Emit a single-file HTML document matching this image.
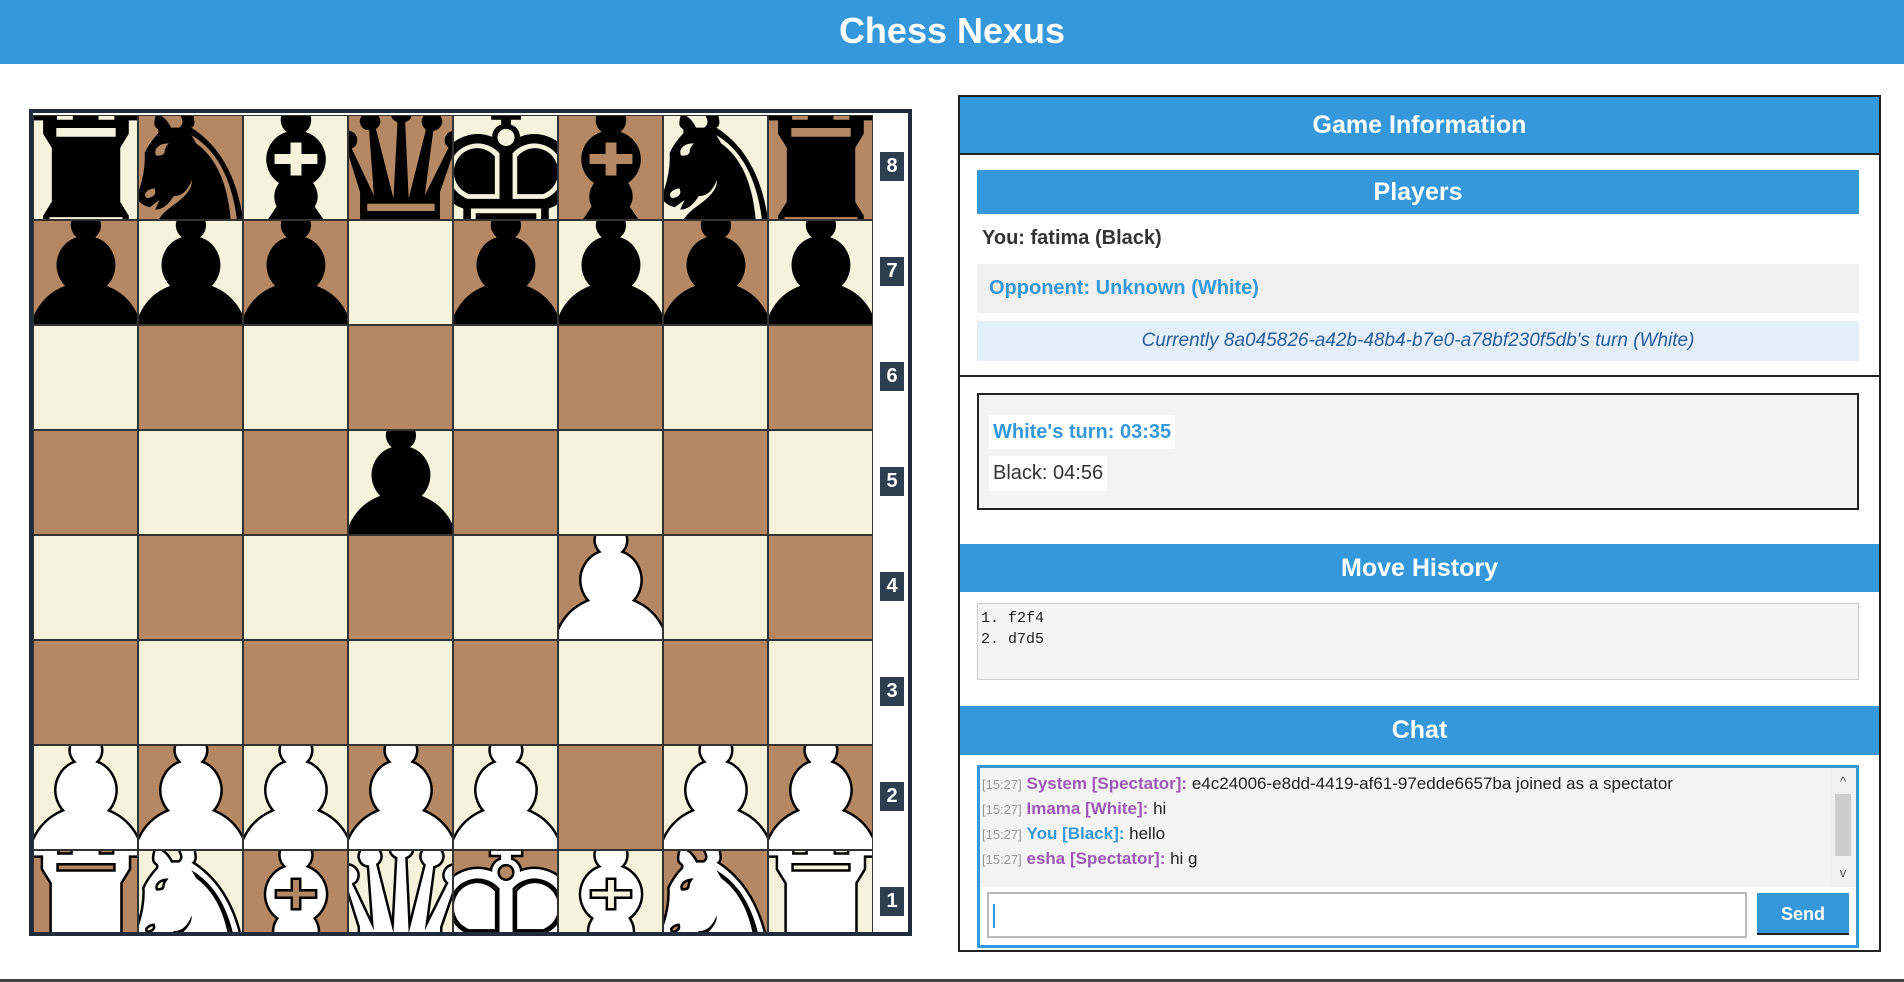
<!DOCTYPE html>
<html><head><meta charset="utf-8"><style>
*{box-sizing:border-box;margin:0;padding:0}
body{width:1904px;height:982px;overflow:hidden;background:#fff;font-family:"Liberation Sans",Arial,sans-serif;position:relative}
.hdr{position:absolute;left:0;top:0;width:1904px;height:64px;background:#3498db;color:#fff;font-weight:bold;font-size:36px;text-align:center;line-height:62px}
.board{position:absolute;left:29px;top:109px;width:883px;height:827px;border:4px solid #1f2d3d;background:#fff;overflow:hidden}
.sq{position:absolute;width:105px;height:105px;border:1px solid #333;overflow:hidden;text-align:center}
.l{background:#f5f3dc}.d{background:#b58863}
.pc{position:absolute;left:-43px;top:-32px;width:190px;font-size:190px;line-height:190px;text-align:center;font-family:"DejaVu Sans",sans-serif}
.b{color:#000}.w{color:#fff;-webkit-text-stroke:5px #000;paint-order:stroke fill}
.lab{position:absolute;left:847px;width:24px;height:29px;background:#2c3e50;color:#fff;font-weight:bold;font-size:20px;text-align:center;line-height:29px}
.panel{position:absolute;left:958px;top:95px;width:923px;height:857px;border:2px solid #222;background:#fff}
.bh{position:absolute;left:0;width:919px;background:#3498db;color:#fff;font-weight:bold;font-size:25px;text-align:center}
.n{font-weight:bold}
</style></head><body>
<div class="hdr">Chess Nexus</div>
<div class="board" id="bd"></div>
<div class="panel">
 <div class="bh" style="top:0;height:56px;line-height:56px">Game Information</div>
 <div style="position:absolute;left:0;top:56px;width:919px;height:224px;border-top:2px solid #222;border-bottom:2px solid #222"></div>
 <div class="bh" style="left:17px;width:882px;top:73px;height:44px;line-height:44px">Players</div>
 <div style="position:absolute;left:22px;top:130px;font-size:20px;font-weight:bold;color:#333">You: fatima (Black)</div>
 <div style="position:absolute;left:17px;top:167px;width:882px;height:49px;background:#f0f0f0;color:#3498db;font-weight:bold;font-size:20px;line-height:49px;padding-left:12px">Opponent: Unknown (White)</div>
 <div style="position:absolute;left:17px;top:224px;width:882px;height:40px;background:#e3f0fb;color:#2a5b9b;font-style:italic;font-size:19px;line-height:40px;text-align:center">Currently 8a045826-a42b-48b4-b7e0-a78bf230f5db's turn (White)</div>
 <div style="position:absolute;left:17px;top:296px;width:882px;height:117px;background:#f4f4f4;border:2px solid #222">
  <div style="position:absolute;left:10px;top:20px;height:34px;padding:0 4px;background:#fff;color:#3498db;font-weight:bold;font-size:20px;line-height:34px">White's turn: 03:35</div>
  <div style="position:absolute;left:10px;top:61px;height:35px;padding:0 4px;background:#fff;color:#333;font-size:20px;line-height:35px">Black: 04:56</div>
 </div>
 <div class="bh" style="top:447px;height:48px;line-height:48px">Move History</div>
 <div style="position:absolute;left:17px;top:506px;width:882px;height:77px;background:#f4f4f4;border:1px solid #ccc;font-family:'Liberation Mono',monospace;font-size:15px;line-height:21px;padding:4px 3px;color:#222">1. f2f4<br>2. d7d5</div>
 <div class="bh" style="top:609px;height:49px;line-height:49px">Chat</div>
 <div style="position:absolute;left:17px;top:668px;width:882px;height:183px;border:3px solid #3498db;background:#fff">
  <div style="position:absolute;left:0;top:0;width:876px;height:119px;background:#f4f4f4;font-size:17px;line-height:24px;padding:4px 2px;color:#222">
   <div><span style="color:#999;font-size:13px">[15:27]</span> <span class="n" style="color:#9b59b6">System [Spectator]:</span> e4c24006-e8dd-4419-af61-97edde6657ba joined as a spectator</div>
   <div><span style="color:#999;font-size:13px">[15:27]</span> <span class="n" style="color:#9b59b6">Imama [White]:</span> hi</div>
   <div><span style="color:#999;font-size:13px">[15:27]</span> <span class="n" style="color:#3498db">You [Black]:</span> hello</div>
   <div><span style="color:#999;font-size:13px">[15:27]</span> <span class="n" style="color:#9b59b6">esha [Spectator]:</span> hi g</div>
   <div style="position:absolute;right:0;top:0;width:26px;height:119px;background:#f0f0f0;color:#555;font-size:13px;text-align:center">
    <div style="position:absolute;top:2px;width:26px">^</div>
    <div style="position:absolute;top:26px;left:5px;width:16px;height:62px;background:#cdcdcd"></div>
    <div style="position:absolute;bottom:2px;width:26px">v</div>
   </div>
  </div>
  <div style="position:absolute;left:7px;top:124px;width:760px;height:46px;border:2px solid #bbb;background:#fff"><div style="position:absolute;left:4px;top:10px;width:2px;height:24px;background:#3498db"></div></div>
  <div style="position:absolute;left:777px;top:125px;width:92px;height:42px;background:#3498db;color:#fff;font-weight:bold;font-size:18px;text-align:center;line-height:42px;border-bottom:2px solid #222">Send</div>
 </div>
</div>
<div style="position:absolute;left:0;top:979px;width:1904px;height:3px;background:#444"></div>
<script>
var bd=document.getElementById('bd');
var rows=[
 [['♜','b'],['♞','b'],['♝','b'],['♛','b'],['♚','b'],['♝','b'],['♞','b'],['♜','b']],
 [['♟','b'],['♟','b'],['♟','b'],null,['♟','b'],['♟','b'],['♟','b'],['♟','b']],
 [null,null,null,null,null,null,null,null],
 [null,null,null,['♟','b'],null,null,null,null],
 [null,null,null,null,null,['♟','w'],null,null],
 [null,null,null,null,null,null,null,null],
 [['♟','w'],['♟','w'],['♟','w'],['♟','w'],['♟','w'],null,['♟','w'],['♟','w']],
 [['♜','w'],['♞','w'],['♝','w'],['♛','w'],['♚','w'],['♝','w'],['♞','w'],['♜','w']]
];
var h='';
for(var r=0;r<8;r++){for(var c=0;c<8;c++){
 var cls=((r+c)%2==0)?'l':'d';
 h+='<div class="sq '+cls+'" style="left:'+(c*105)+'px;top:'+(2+r*105)+'px">';
 var p=rows[r][c];
 if(p)h+='<div class="pc '+p[1]+'">'+p[0]+'</div>';
 h+='</div>';}
 h+='<div class="lab" style="top:'+(r*105+39)+'px">'+(8-r)+'</div>';}
bd.innerHTML=h;
</script>
</body></html>
